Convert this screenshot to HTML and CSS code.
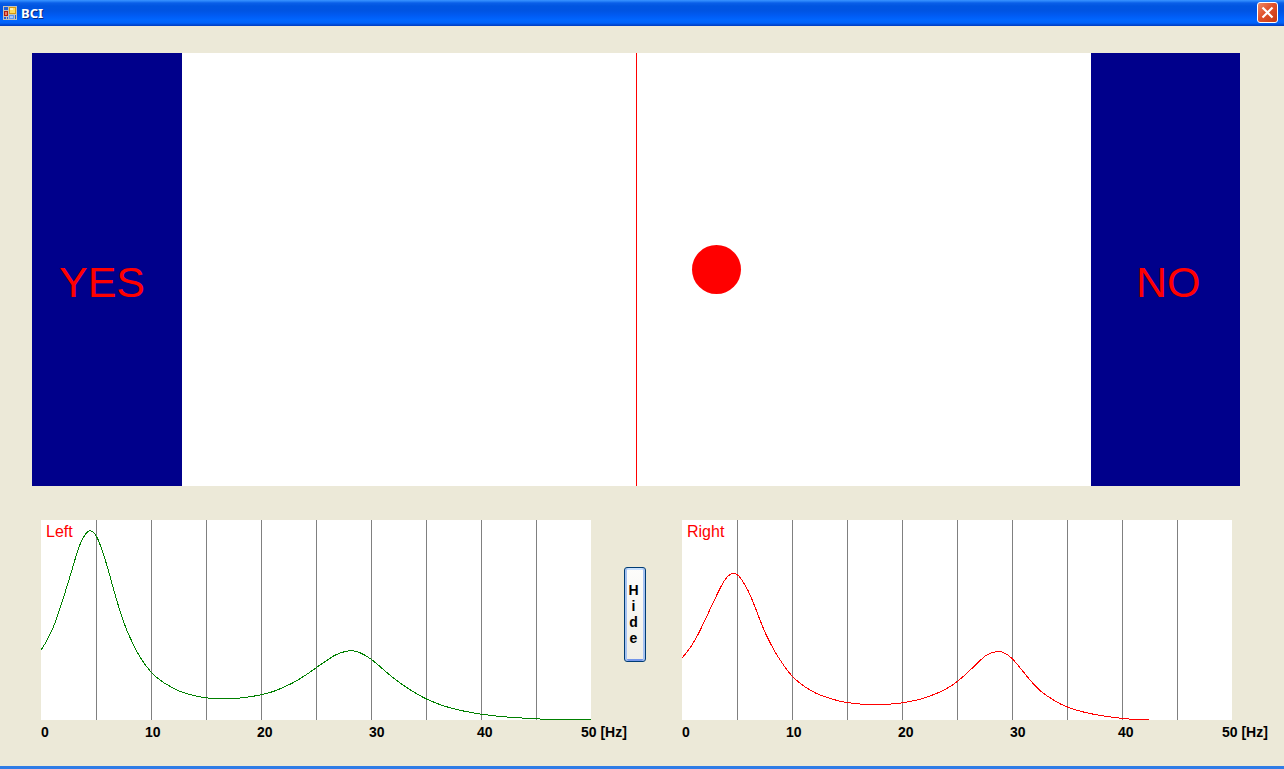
FILE: index.html
```html
<!DOCTYPE html>
<html lang="en">
<head>
<meta charset="utf-8">
<title>BCI</title>
<link rel="stylesheet" href="styles.css">
</head>
<body>
<div class="window">
  <header class="titlebar">
    <svg class="app-icon" viewBox="0 0 14 14" width="14" height="14" aria-hidden="true">
      <rect width="14" height="14" fill="#c5c2b8"/>
      <rect x="1" y="1" width="4" height="3" fill="#1d5fd8"/>
      <rect x="6" y="1" width="7" height="7" fill="#d79a10"/>
      <rect x="7" y="2" width="5" height="5" fill="#ffd95c"/>
      <rect x="7" y="2" width="3" height="2" fill="#fff0a8"/>
      <rect x="1" y="5" width="4" height="5" fill="#b01d10"/>
      <rect x="2" y="6" width="2" height="3" fill="#f07a60"/>
      <rect x="1" y="11" width="2" height="2" fill="#1d5fd8"/>
      <rect x="4" y="11" width="1" height="2" fill="#1d5fd8"/>
      <rect x="6" y="9" width="5" height="4" fill="#5f96f0"/>
      <rect x="7" y="10" width="3" height="2" fill="#a5c6ff"/>
      <rect x="12" y="9" width="1" height="4" fill="#1d5fd8"/>
    </svg>
    <h1 class="title">BCI</h1>
    <button class="close" type="button" aria-label="Close">
      <svg viewBox="0 0 13 13" width="13" height="13" aria-hidden="true"><path d="M1.500 1.500l10 10M11.500 1.500l-10 10" stroke="#fff" stroke-width="2.200"/></svg>
    </button>
  </header>
  <main class="content">
    <section class="board">
      <div class="target target-yes">YES</div>
      <div class="field"><div class="midline"></div><div class="ball"></div></div>
      <div class="target target-no">NO</div>
    </section>
    <section class="spectra">
      <figure class="chart">
        <div class="plot">
          <svg class="plot-svg" viewBox="0 0 550 200" preserveAspectRatio="none" aria-hidden="true">
            <path class="grid" d="M55.5 0V200M110.5 0V200M165.5 0V200M220.5 0V200M275.5 0V200M330.5 0V200M385.5 0V200M440.5 0V200M495.5 0V200"/>
            <path class="curve curve-left" data-points="0,130 5,122 9,114 14,103 22,79 30.5,51.5 38,27 44,14.7 49.5,10.7 55.5,16.5 60.5,28.5 66.5,47.5 72.5,69 79,91 84,105.5 89,117.5 99,137 110.5,152.5 122.5,162.5 139,171.3 155.5,176.2 169,178.2 184,178.7 199.5,178 221.5,174.5 235.5,170.3 252.5,162.5 265.5,154.5 275.5,147.5 286,140.3 295.5,134.5 309,130.7 319,132.7 330.5,139.5 345.5,152.2 359,163 372.5,171.8 385.5,179 402.5,185.8 422.5,191 440.5,194.2 465.5,197 495.5,198.8 510,199.4 550,199.4"/>
          </svg>
          <figcaption class="name">Left</figcaption>
        </div>
        <div class="axis"><span>0</span><span>10</span><span>20</span><span>30</span><span>40</span><span>50 [Hz]</span></div>
      </figure>
      <button class="hide" type="button" aria-label="Hide"><span>H</span><span>i</span><span>d</span><span>e</span></button>
      <figure class="chart">
        <div class="plot">
          <svg class="plot-svg" viewBox="0 0 550 200" preserveAspectRatio="none" aria-hidden="true">
            <path class="grid" d="M55.5 0V200M110.5 0V200M165.5 0V200M220.5 0V200M275.5 0V200M330.5 0V200M385.5 0V200M440.5 0V200M495.5 0V200"/>
            <path class="curve curve-right" data-points="0,138 8,128 16.5,113.5 23,100 31.5,82 38,68.5 43.5,59 48.5,54.2 54.5,54.2 59.5,59.5 66.5,71.5 73,87 78,100 84.5,115.5 93,131.7 101.5,145 110.5,156.5 121.5,165.8 134.5,173.5 151.5,179.5 165.5,182.6 180,184.2 194.5,184.5 209.5,184 221.5,182.6 238,179.3 254.5,173.5 266.5,167.5 275.5,161.3 284,154 293,145.5 304.5,135.2 315.5,131.5 323,133.3 330.5,139 339.5,149.5 348,160 358,170.5 373,181 385.5,187 401.5,192 421.5,196 440.5,198.4 452,199.4 467,199.4"/>
          </svg>
          <figcaption class="name">Right</figcaption>
        </div>
        <div class="axis"><span>0</span><span>10</span><span>20</span><span>30</span><span>40</span><span>50 [Hz]</span></div>
      </figure>
    </section>
  </main>
</div>
<script src="chart.js"></script>
</body>
</html>
```
FILE: styles.css
```css
* { box-sizing: border-box; }
body {
  margin: 0;
  background: #ece9d8;
  font-family: "Liberation Sans", Arial, sans-serif;
}
.window {
  display: flex;
  flex-direction: column;
  min-height: 100vh;
  border-bottom: 3px solid #2f7ce6;
}
.titlebar {
  display: flex;
  align-items: center;
  height: 26px;
  padding: 0 6px 1px 3px;
  background: linear-gradient(#3a93ff 0, #2a86fa 1px, #0a5fe8 3px, #0055e0 6px, #0054e3 11px, #005cf5 16px, #0066ff 20px, #0062fa 23px, #0046cf 25px, #003cc0 26px);
}
.app-icon { flex: none; }
.title {
  flex: 1;
  margin: 0 0 0 4px;
  color: #fff;
  font: bold 13px/16px "Noto Sans", sans-serif;
  text-shadow: 1px 1px 0 #0b2a80;
}
.close {
  display: flex;
  align-items: center;
  justify-content: center;
  width: 21px;
  height: 21px;
  padding: 0;
  border: 1px solid #fff;
  border-radius: 3px;
  background: linear-gradient(135deg, #ee8a68, #e0512b 45%, #c63a12);
}
.content { flex: 1; }
.board {
  display: flex;
  height: 433px;
  margin: 27px 44px 0 32px;
  background: #fff;
}
.target {
  flex: none;
  width: 150px;
  padding-top: 204px;
  background: #00008b;
  color: #f00;
  font-size: 43px;
  line-height: 50px;
}
.target-yes { padding-left: 27px; }
.target-no {
  width: 149px;
  padding-left: 45px;
}
.field {
  position: relative;
  flex: 1;
  display: flex;
  justify-content: center;
}
.midline { width: 1px; background: #f00; }
.ball {
  position: absolute;
  left: 510px;
  top: 192px;
  width: 49px;
  height: 49px;
  border-radius: 50%;
  background: #f00;
}
.spectra {
  display: flex;
  align-items: flex-start;
  margin: 34px 52px 0 41px;
}
.chart { flex: 1; margin: 0; }
.plot {
  position: relative;
  height: 200px;
  background: #fff;
}
.plot-svg {
  display: block;
  width: 100%;
  height: 100%;
}
.grid, .curve {
  fill: none;
  stroke-width: 1px;
  vector-effect: non-scaling-stroke;
  shape-rendering: crispEdges;
}
.grid { stroke: #808080; }
.curve-left { stroke: #008000; }
.curve-right { stroke: #f00; }
.name {
  position: absolute;
  left: 5px;
  top: 2px;
  color: #f00;
  font-size: 16px;
  line-height: 20px;
}
.axis {
  display: grid;
  grid-template-columns: 104fr 112fr 112fr 108fr 104fr 10fr;
  padding-top: 4px;
  font-size: 14px;
  font-weight: bold;
  line-height: 16px;
  white-space: nowrap;
}
.axis span { min-width: 0; width: 0; }
.hide {
  display: flex;
  flex-direction: column;
  align-items: center;
  flex: none;
  width: 22px;
  height: 95px;
  margin: 47px 36px 0 33px;
  padding: 14px 3px 0 0;
  border: 1px solid #003c74;
  border-radius: 3px;
  background: linear-gradient(#fdfdfb, #efeee8);
  box-shadow: inset 2px 0 #a6c3f2, inset -2px 0 #a6c3f2, inset 0 2px #cbe2ff, inset 0 -2px #7395ea;
  color: #000;
  font: bold 14px/16px "Liberation Sans", Arial, sans-serif;
}
```
FILE: chart.js
```js
// Draws each spectrum as a smooth curve through its sample points.
document.querySelectorAll('.curve').forEach(function (path) {
  var p = path.dataset.points.split(' ').map(function (s) { return s.split(',').map(Number); });
  var d = 'M' + p[0];
  for (var i = 0; i < p.length - 1; i++) {
    var a = p[i - 1] || p[i], b = p[i], c = p[i + 1], e = p[i + 2] || c;
    var h = (c[0] - b[0]) / 3;
    var s1 = (c[1] - a[1]) / (c[0] - a[0]);
    var s2 = (e[1] - b[1]) / (e[0] - b[0]);
    d += 'C' + [b[0] + h, b[1] + s1 * h, c[0] - h, c[1] - s2 * h, c[0], c[1]].join(' ');
  }
  path.setAttribute('d', d);
});
```
